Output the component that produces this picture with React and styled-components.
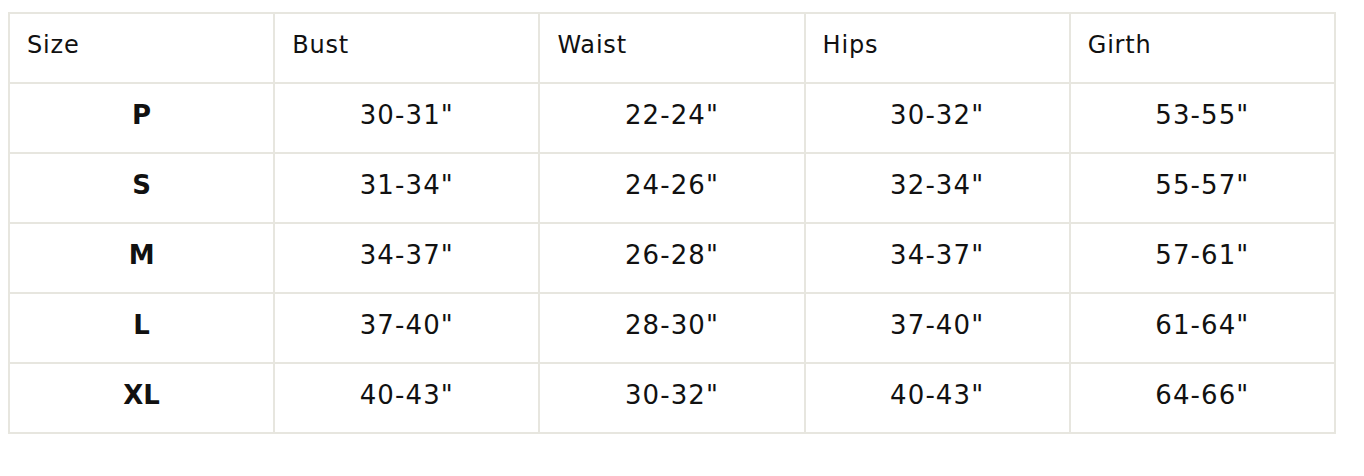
import React from 'react'
import styled, { createGlobalStyle } from 'styled-components'

const GlobalStyle = createGlobalStyle`
  body {
    margin: 0;
    background: #fff;
    font-family: "DejaVu Sans", "Liberation Sans", sans-serif;
    color: #111;
  }
`

const Wrapper = styled.div`
  padding: 12px 0 0 8px;
`

const SizeTable = styled.table`
  width: 1328px;
  border-collapse: collapse;
  table-layout: fixed;
  border: 2px solid #e7e6df;
`

const HeadCell = styled.th`
  height: 61px;
  border: 2px solid #e7e6df;
  padding: 0 0 7px 17px;
  text-align: left;
  font-weight: 400;
  font-size: 24px;
  letter-spacing: 0.8px;
`

const Cell = styled.td`
  height: 61px;
  border: 2px solid #e7e6df;
  padding: 0 0 7px;
  text-align: center;
  font-size: 26px;
  font-weight: ${p => (p.$bold ? 700 : 400)};
  letter-spacing: ${p => (p.$bold ? '0' : '1.1px')};
`

const columns = ['Size', 'Bust', 'Waist', 'Hips', 'Girth']

const rows = [
  ['P', '30-31"', '22-24"', '30-32"', '53-55"'],
  ['S', '31-34"', '24-26"', '32-34"', '55-57"'],
  ['M', '34-37"', '26-28"', '34-37"', '57-61"'],
  ['L', '37-40"', '28-30"', '37-40"', '61-64"'],
  ['XL', '40-43"', '30-32"', '40-43"', '64-66"']
]

export default function App() {
  return (
    <Wrapper>
      <GlobalStyle />
      <SizeTable>
        <thead>
          <tr>
            {columns.map(c => (
              <HeadCell key={c}>{c}</HeadCell>
            ))}
          </tr>
        </thead>
        <tbody>
          {rows.map(r => (
            <tr key={r[0]}>
              {r.map((v, i) => (
                <Cell key={i} $bold={i === 0}>
                  {v}
                </Cell>
              ))}
            </tr>
          ))}
        </tbody>
      </SizeTable>
    </Wrapper>
  )
}
